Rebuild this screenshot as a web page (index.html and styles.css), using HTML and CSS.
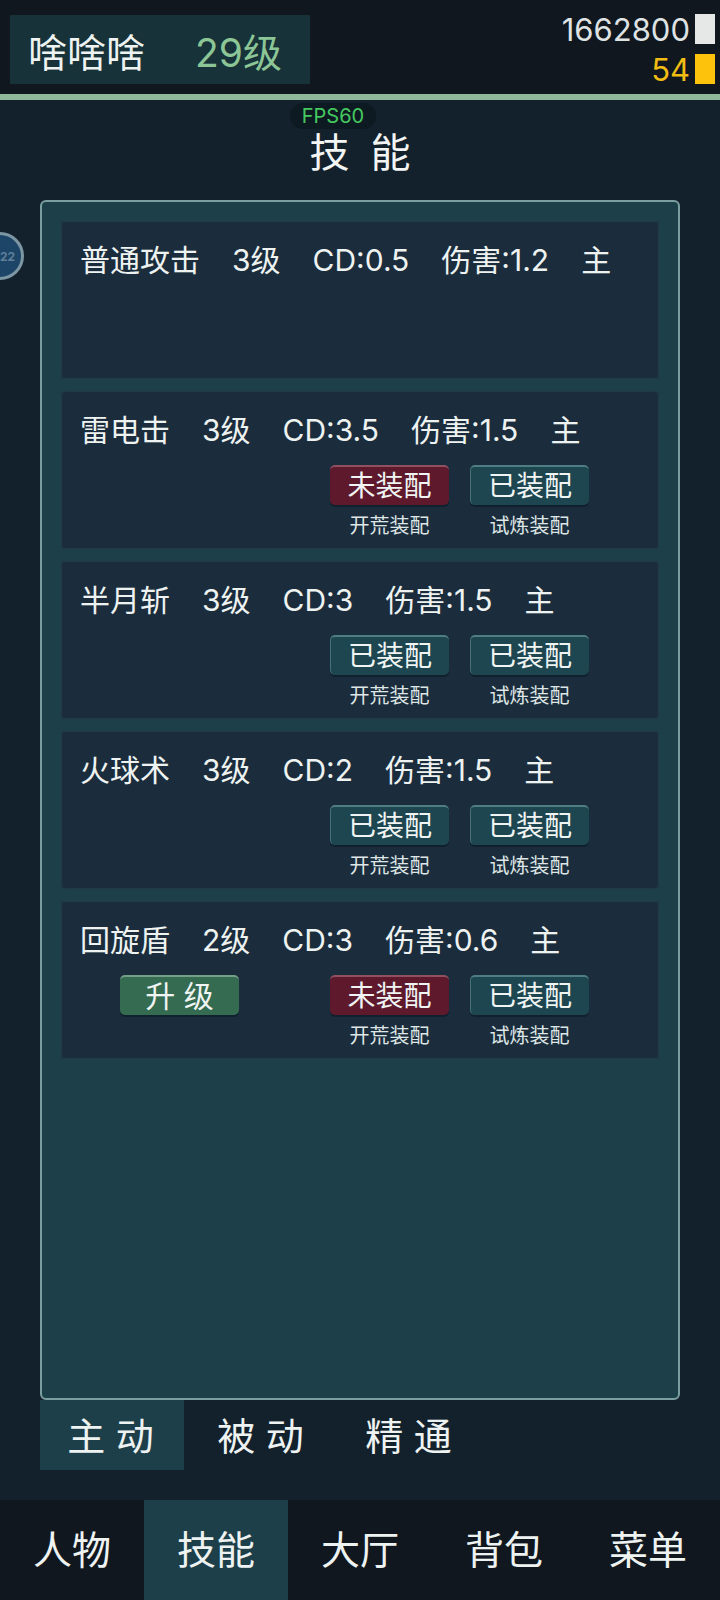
FILE: index.html
```html
<!DOCTYPE html>
<html lang="zh">
<head>
<meta charset="utf-8">
<title>技能</title>
<link rel="stylesheet" href="styles.css">
</head>
<body>
<div class="app">
  <header class="top">
    <div class="player"><span class="name">啥啥啥</span><span class="lvl">29级</span></div>
    <div class="money">
      <div class="coin"><span>1662800</span><i class="sq sq-w"></i></div>
      <div class="coin gold"><span>54</span><i class="sq sq-y"></i></div>
    </div>
  </header>
  <main class="main">
    <div class="fps">FPS60</div>
    <div class="float-btn">22</div>
    <h1 class="title">技 能</h1>
    <section class="panel">
      <article class="card">
        <div class="stats"><span>普通攻击</span><span>3级</span><span>CD:0.5</span><span>伤害:1.2</span><span>主</span></div>
      </article>
      <article class="card">
        <div class="stats"><span>雷电击</span><span>3级</span><span>CD:3.5</span><span>伤害:1.5</span><span>主</span></div>
        <div class="actions">
          <div class="slot"><button class="btn red">未装配</button><small>开荒装配</small></div>
          <div class="slot"><button class="btn teal">已装配</button><small>试炼装配</small></div>
        </div>
      </article>
      <article class="card">
        <div class="stats"><span>半月斩</span><span>3级</span><span>CD:3</span><span>伤害:1.5</span><span>主</span></div>
        <div class="actions">
          <div class="slot"><button class="btn teal">已装配</button><small>开荒装配</small></div>
          <div class="slot"><button class="btn teal">已装配</button><small>试炼装配</small></div>
        </div>
      </article>
      <article class="card">
        <div class="stats"><span>火球术</span><span>3级</span><span>CD:2</span><span>伤害:1.5</span><span>主</span></div>
        <div class="actions">
          <div class="slot"><button class="btn teal">已装配</button><small>开荒装配</small></div>
          <div class="slot"><button class="btn teal">已装配</button><small>试炼装配</small></div>
        </div>
      </article>
      <article class="card">
        <div class="stats"><span>回旋盾</span><span>2级</span><span>CD:3</span><span>伤害:0.6</span><span>主</span></div>
        <div class="actions">
          <button class="btn green">升 级</button>
          <div class="slot"><button class="btn red">未装配</button><small>开荒装配</small></div>
          <div class="slot"><button class="btn teal">已装配</button><small>试炼装配</small></div>
        </div>
      </article>
    </section>
    <div class="tabs">
      <div class="tab on">主 动</div>
      <div class="tab">被 动</div>
      <div class="tab">精 通</div>
    </div>
  </main>
  <nav class="nav">
    <div class="nav-item">人物</div>
    <div class="nav-item on">技能</div>
    <div class="nav-item">大厅</div>
    <div class="nav-item">背包</div>
    <div class="nav-item">菜单</div>
  </nav>
</div>
</body>
</html>
```
FILE: styles.css
```css
* { box-sizing: border-box; }
html, body { margin: 0; padding: 0; }
body {
  width: 720px;
  height: 1600px;
  overflow: hidden;
  background: #13212c;
  color: #eef3f2;
  font-family: Inter, "Noto Sans CJK SC", sans-serif;
}
.app { display: flex; flex-direction: column; height: 1600px; }

.top {
  height: 100px;
  flex: none;
  display: flex;
  justify-content: space-between;
  background: #10171f;
  border-bottom: 6px solid #8fb89b;
  padding: 15px 5px 0 10px;
}
.player {
  width: 300px;
  height: 69px;
  background: #173239;
  display: flex;
  align-items: center;
  padding-left: 18px;
  gap: 50px;
  font-size: 39px;
}
.lvl { color: #8cc596; font-size: 39px; }
.money { display: flex; flex-direction: column; gap: 10px; margin-top: -1px; }
.coin {
  height: 30px;
  display: flex;
  justify-content: flex-end;
  align-items: center;
  gap: 5px;
  font-size: 31px;
  color: #dfe3e4;
}
.gold { color: #f2bd12; }
.sq { width: 20px; height: 30px; display: block; }
.sq-w { background: #e6e8e8; }
.sq-y { background: #fdc20c; }

.main { flex: 1; position: relative; display: flex; flex-direction: column; align-items: flex-start; }
.fps {
  position: absolute;
  left: 290px;
  top: 3px;
  width: 86px;
  height: 26px;
  border-radius: 13px;
  background: #0e1a22;
  color: #45c860;
  font-size: 20px;
  line-height: 26px;
  text-align: center;
}
.float-btn {
  position: absolute;
  left: -24px;
  top: 132px;
  width: 48px;
  height: 48px;
  border-radius: 50%;
  background: #1c4568;
  border: 3px solid #7d96a4;
  color: #5f7f98;
  font-size: 12px;
  font-weight: 700;
  line-height: 44px;
  text-align: right;
  padding-right: 6px;
}
.title {
  align-self: center;
  margin: 28px 0 0;
  height: 72px;
  font-size: 40px;
  font-weight: 400;
  line-height: 50px;
  word-spacing: 10px;
  color: #f2f5f4;
}
.panel {
  width: 640px;
  height: 1200px;
  margin-left: 40px;
  background: #1d3f4a;
  border: 2px solid #7a9fa0;
  border-radius: 6px;
  padding: 19px 19px 0;
  display: flex;
  flex-direction: column;
  gap: 12px;
}
.card {
  height: 158px;
  flex: none;
  background: #1b2d3c;
  box-shadow: inset 0 0 0 1px #21394a;
  border-radius: 4px;
  padding: 17px 19px 0;
}
.stats {
  display: flex;
  gap: 32px;
  font-size: 30px;
  line-height: 44px;
  height: 44px;
}
.actions {
  display: flex;
  align-items: flex-start;
  padding-left: 250px;
  position: relative;
  margin-top: 13px;
  gap: 21px;
}
.slot { width: 119px; display: flex; flex-direction: column; align-items: center; }
.slot small { font-size: 20px; line-height: 26px; margin-top: 8px; color: #dfe6e6; }
.btn {
  width: 119px;
  height: 40px;
  padding: 0;
  border: 0;
  border-radius: 5px;
  color: #f0f4f3;
  font-family: inherit;
  font-size: 28px;
  line-height: 38px;
}
.red { background: #5e1a2c; border-top: 2px solid #8f5060; box-shadow: 0 2px 0 #10202c; }
.teal { background: #1d4650; border-top: 2px solid #4f7d84; border-left: 1px solid #44707a; box-shadow: 0 2px 0 #10202c; }
.green { background: #356b50; border-top: 2px solid #74a088; box-shadow: 0 2px 0 #10202c; position: absolute; left: 40px; top: 0; font-size: 30px; }

.tabs { display: flex; margin-left: 40px; }
.tab {
  width: 148px;
  height: 70px;
  padding-right: 3px;
  font-size: 38px;
  line-height: 72px;
  text-align: center;
}
.tab.on { width: 144px; background: #1d3f4a; margin-right: 4px; }

.nav { height: 100px; flex: none; display: flex; background: #10171f; }
.nav-item { width: 144px; font-size: 39px; line-height: 100px; text-align: center; }
.nav-item.on { background: #1d3f4a; }
```
